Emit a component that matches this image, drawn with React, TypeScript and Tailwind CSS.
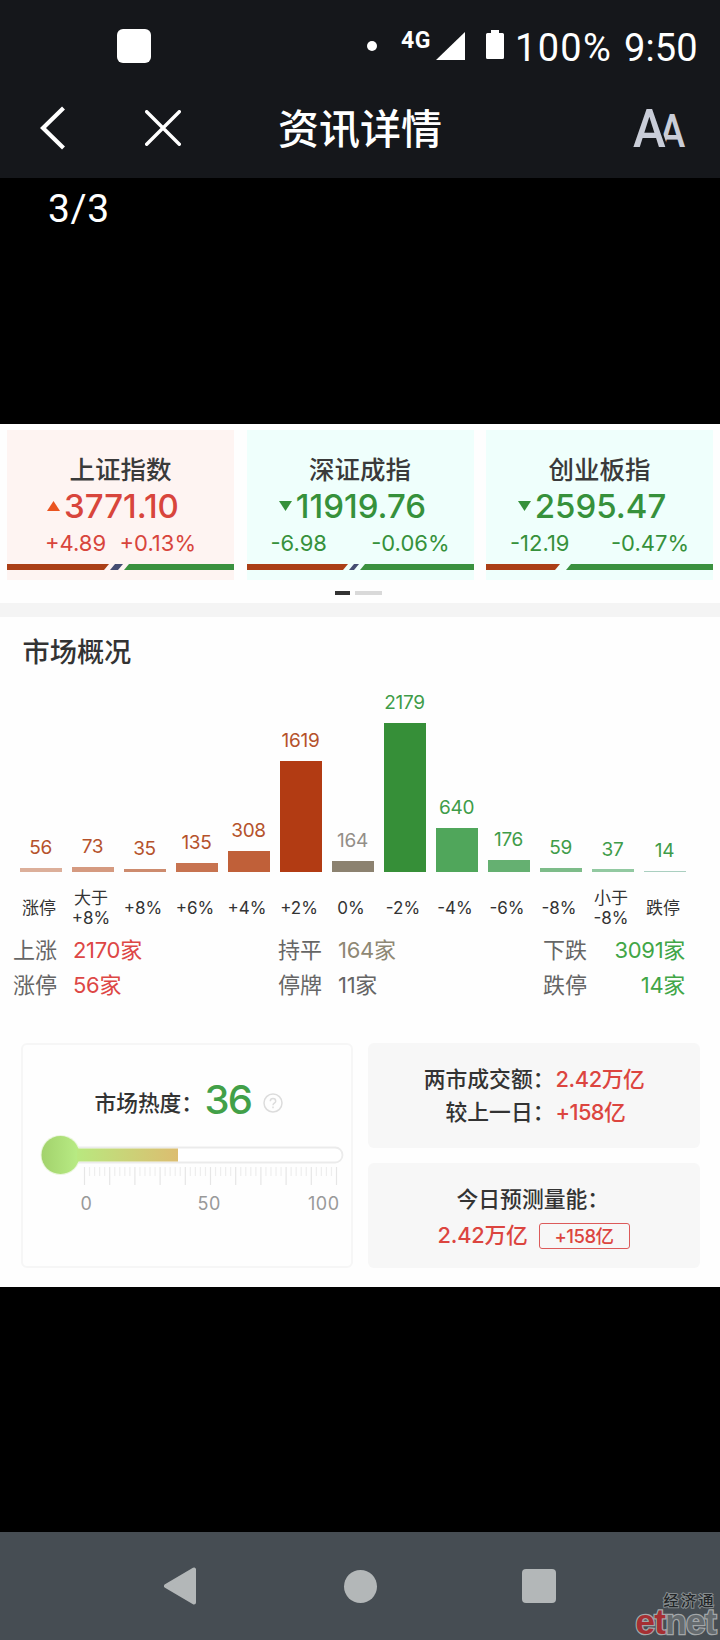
import React from 'react'

interface IndexQuote {
  name: string
  price: string
  change: string
  percent: string
  up: boolean
  // breadth bar: end of the rising part, flat part and start of the falling part
  rise: number
  flat?: [number, number]
  fall: number
}

const quotes: IndexQuote[] = [
  { name: '上证指数', price: '3771.10', change: '+4.89', percent: '+0.13%', up: true, rise: 102, flat: [103, 116], fall: 117 },
  { name: '深证成指', price: '11919.76', change: '-6.98', percent: '-0.06%', up: false, rise: 101, flat: [102, 112], fall: 113 },
  { name: '创业板指', price: '2595.47', change: '-12.19', percent: '-0.47%', up: false, rise: 74, fall: 80 },
]

const bars = [
  { label: ['涨停'], value: 56, height: 4, fill: 'bg-[#dcaf9a]', text: 'text-[#b5522b]' },
  { label: ['大于', '+8%'], value: 73, height: 5, fill: 'bg-[#d59a80]', text: 'text-[#b5522b]' },
  { label: ['+8%'], value: 35, height: 3, fill: 'bg-[#cd8b6e]', text: 'text-[#b5522b]' },
  { label: ['+6%'], value: 135, height: 9.5, fill: 'bg-[#c77350]', text: 'text-[#b5522b]' },
  { label: ['+4%'], value: 308, height: 21, fill: 'bg-[#c06039]', text: 'text-[#b5522b]' },
  { label: ['+2%'], value: 1619, height: 111, fill: 'bg-[#b23b13]', text: 'text-[#b5522b]' },
  { label: ['0%'], value: 164, height: 11.3, fill: 'bg-[#8c8270]', text: 'text-[#938e88]' },
  { label: ['-2%'], value: 2179, height: 149, fill: 'bg-[#368f38]', text: 'text-[#3f9c49]' },
  { label: ['-4%'], value: 640, height: 44, fill: 'bg-[#50a65b]', text: 'text-[#3f9c49]' },
  { label: ['-6%'], value: 176, height: 12, fill: 'bg-[#65b071]', text: 'text-[#3f9c49]' },
  { label: ['-8%'], value: 59, height: 4, fill: 'bg-[#7dbc89]', text: 'text-[#3f9c49]' },
  { label: ['小于', '-8%'], value: 37, height: 2.6, fill: 'bg-[#92c9a1]', text: 'text-[#3f9c49]' },
  { label: ['跌停'], value: 14, height: 1, fill: 'bg-[#aacfc0]', text: 'text-[#3f9c49]' },
]

const StatusBar = () => (
  <div className="flex h-[92px] items-center pl-[117px] font-[Roboto] text-white">
    <div className="h-[34px] w-[34px] rounded-[6px] bg-white" />
    <div className="ml-[216px] h-[10px] w-[10px] rounded-full bg-white" />
    <span className="mb-[12px] ml-[24px] w-[32px] text-[23px] leading-none font-bold tracking-[0.5px]">4G</span>
    <svg className="ml-[3px]" width="29" height="28" viewBox="0 0 29 28">
      <path d="M29 0v28H0z" fill="#fff" />
    </svg>
    <svg className="mb-[3px] ml-[21px]" width="18" height="29" viewBox="0 0 18 29">
      <path d="M5 0h8v3h3.500q1.500 0 1.500 1.500v23q0 1.500-1.500 1.500h-15Q0 29 0 27.500v-23Q0 3 1.500 3H5z" fill="#fff" />
    </svg>
    <span className="mt-[4px] ml-[11px] flex gap-[12px] text-[38px] leading-none whitespace-nowrap">
      <span className="tracking-[1.300px]">100%</span>
      <span className="tracking-[0.100px]">9:50</span>
    </span>
  </div>
)

const TitleBar = () => (
  <div className="flex h-[72px] items-center pl-[40px] text-white">
    <svg width="26" height="44" viewBox="0 0 26 44" fill="none" stroke="#fff" strokeWidth="4.200">
      <path d="M23.500 2L3 22l20.500 20" />
    </svg>
    <svg className="ml-[79px]" width="36" height="36" viewBox="0 0 36 36" fill="none" stroke="#fff" strokeWidth="3.400" strokeLinecap="round">
      <path d="M1.700 1.700l32.600 32.600M34.300 1.700L1.700 34.300" />
    </svg>
    <h1 className="mt-[-3px] ml-[97px] w-[164px] font-['Noto_Sans_CJK_SC',sans-serif] text-[41px] leading-none font-medium whitespace-nowrap">
      资讯详情
    </h1>
    <div className="mt-[2px] ml-[191px] flex items-baseline font-[Roboto] leading-none text-[#c9cdd8]">
      <span className="relative z-10 w-[33px] origin-left scale-x-[.93] text-[53px] font-medium [-webkit-text-stroke:5px_#15171b] [paint-order:stroke]">A</span>
      <span className="ml-[-7px] origin-left scale-x-[.86] text-[46px] font-medium">A</span>
    </div>
  </div>
)

const BreadthBar = ({ rise, flat, fall }: Pick<IndexQuote, 'rise' | 'flat' | 'fall'>) => (
  <svg className="block" width="227" height="6" viewBox="0 0 227 6">
    <path d={`M0 0H${rise}L${rise - 5} 6H0z`} fill="#ab3f17" />
    {flat && <path d={`M${flat[0] + 5} 0H${flat[1]}L${flat[1] - 5} 6H${flat[0]}z`} fill="#454d72" />}
    <path d={`M${fall + 5} 0H227V6H${fall}z`} fill="#3a913f" />
  </svg>
)

const QuoteCard = ({ quote }: { quote: IndexQuote }) => {
  const color = quote.up ? 'text-[#d8453c]' : 'text-[#36913b]'
  return (
    <div className={`h-[150px] w-[227px] pt-[27px] ${quote.up ? 'bg-[#fef4f2]' : 'bg-[#effffc]'}`}>
      <div className="flex h-[26px] items-center justify-center text-[25.500px] leading-none font-medium text-[#3a3a3a]">{quote.name}</div>
      <div className={`mt-[6px] flex h-[34px] items-center justify-center gap-[4px] pr-[15px] text-[33px] leading-none font-[450] ${color}`}>
        <svg width="13" height="10" viewBox="0 0 13 10">
          {quote.up ? <path d="M6.500 0L13 10H0z" fill="#ea5420" /> : <path d="M0 0h13L6.500 10z" fill="#36913b" />}
        </svg>
        {quote.price}
      </div>
      <div className={`mt-[8px] flex h-[24px] items-center justify-between text-[22px] leading-none ${quote.up ? 'pr-[38px] pl-[38px]' : 'pr-[24px] pl-[24px]'} ${color}`}>
        <span>{quote.change}</span>
        <span>{quote.percent}</span>
      </div>
      <div className="mt-[9px]">
        <BreadthBar rise={quote.rise} flat={quote.flat} fall={quote.fall} />
      </div>
    </div>
  )
}

const Distribution = () => (
  <div>
    <div className="flex h-[206px] items-end pl-[14.500px]">
      {bars.map((bar, i) => (
        <div key={i} className="flex w-[52px] flex-col items-center">
          <span className={`mb-[9.600px] text-[19px] leading-[20px] tracking-[-0.3px] ${bar.text}`}>{bar.value}</span>
          <div className={`w-[42px] ${bar.fill}`} style={{ height: bar.height }} />
        </div>
      ))}
    </div>
    <div className="mt-[16px] flex h-[40px] items-center pl-[13px] text-[17px] leading-[20px] text-[#333]" >
      {bars.map((bar, i) => (
        <div key={i} className="flex w-[52px] flex-col items-center whitespace-nowrap">
          {bar.label.map((line) => (
            <span key={line} className="h-[20px]">{line}</span>
          ))}
        </div>
      ))}
    </div>
  </div>
)

const Stat = ({ label, value, color }: { label: string; value: string; color: string }) => (
  <div className="flex h-[35px] items-center">
    <span className="w-[60px] text-[#666]">{label}</span>
    <span className={`flex-1 tracking-[-0.3px] ${color}`}>{value}</span>
  </div>
)

const Summary = () => (
  <div className="mt-[4px] flex text-[22px] leading-none whitespace-nowrap">
    <div className="w-[265px] pl-[13px]">
      <Stat label="上涨" value="2170家" color="text-[#dd4745]" />
      <Stat label="涨停" value="56家" color="text-[#dd4745]" />
    </div>
    <div className="w-[265px] pl-[13px]">
      <Stat label="持平" value="164家" color="text-[#8f8874]" />
      <Stat label="停牌" value="11家" color="text-[#666]" />
    </div>
    <div className="w-[155px] pl-[13px]">
      <Stat label="下跌" value="3091家" color="text-right text-[#41a646]" />
      <Stat label="跌停" value="14家" color="text-right text-[#41a646]" />
    </div>
  </div>
)

const Thermometer = () => (
  <svg className="block" width="306" height="74" viewBox="0 0 306 74">
    <defs>
      <linearGradient id="bulb">
        <stop offset="0" stopColor="#a2d26c" />
        <stop offset="1" stopColor="#b9ec85" />
      </linearGradient>
      <linearGradient id="tube">
        <stop offset="0" stopColor="#b9e87f" />
        <stop offset="1" stopColor="#dcbd70" />
      </linearGradient>
    </defs>
    <rect x="22" y="13.500" width="280.500" height="15" rx="7.500" fill="#fff" stroke="#ebebeb" strokeWidth="1.800" />
    <circle cx="20.500" cy="21" r="20" fill="#eaf6dc" />
    <circle cx="20.500" cy="21" r="19" fill="url(#bulb)" />
    <path d="M37 14.500h101v13H37z" fill="url(#tube)" />
    {Array.from({ length: 51 }).map((_, i) => (
      <path key={i} d={`M${44.5 + i * 5.04} 33v${i % 5 === 0 ? 18 : 9}`} stroke={i % 5 === 0 ? '#e6e6e6' : '#eeeeee'} strokeWidth="1.200" />
    ))}
  </svg>
)

const HeatCard = () => (
  <div className="h-[225px] w-[332px] rounded-[6px] border-2 border-[#f6f6f6]">
    <div className="mt-[33px] flex h-[48px] items-center pl-[72px]">
      <span className="mt-[4px] w-[110px] text-[21.700px] leading-none font-medium whitespace-nowrap text-[#333]">市场热度：</span>
      <span className="mt-[-4px] w-[58px] text-[40px] leading-none font-medium tracking-[-1.800px] text-[#42a048]">36</span>
      <svg className="mt-[2px]" width="20" height="20" viewBox="0 0 20 20" fill="none" stroke="#dcdcdc" strokeWidth="1.500">
        <circle cx="10" cy="10" r="9" />
        <path d="M7.300 8.200c0-3.600 5.400-3.600 5.400 0 0 2-2.700 2-2.700 4M10 13.500v1.700" />
      </svg>
    </div>
    <div className="mt-[8px] ml-[17px]">
      <Thermometer />
    </div>
    <div className="mt-[-14px] flex justify-between pr-[11px] pl-[58px] text-[18px] leading-[20px] tracking-[0.5px] text-[#999]">
      <span>0</span>
      <span className="pl-[18px]">50</span>
      <span>100</span>
    </div>
  </div>
)

const TurnoverCards = () => (
  <div className="flex flex-col gap-[15px] text-[21.800px] leading-none whitespace-nowrap text-[#333]">
    <div className="h-[105px] w-[332px] rounded-[6px] bg-[#f7f7f7] pt-[20.500px]">
      <div className="flex h-[33px] items-center">
        <span className="w-[187px] text-right font-medium">两市成交额：</span>
        <span className="pl-[1px] font-[450] tracking-[-0.4px] text-[#dc453f]">2.42万亿</span>
      </div>
      <div className="flex h-[33px] items-center">
        <span className="w-[187px] text-right font-medium">较上一日：</span>
        <span className="pl-[1px] font-[450] tracking-[-0.6px] text-[#dc453f]">+158亿</span>
      </div>
    </div>
    <div className="h-[105px] w-[332px] rounded-[6px] bg-[#f7f7f7] pt-[19px]">
      <div className="flex h-[36px] items-center pl-[89px] font-medium">今日预测量能：</div>
      <div className="flex h-[36px] items-center pl-[70px] text-[#dc453f]">
        <span className="w-[101px] font-[450] tracking-[-0.2px]">2.42万亿</span>
        <span className="flex h-[26px] w-[91px] items-center justify-center rounded-[3px] border border-[#dc5a5a] text-[18.500px] font-[450] tracking-[-0.5px]">+158亿</span>
      </div>
    </div>
  </div>
)

const NavBar = () => (
  <div className="relative h-[108px] bg-[#464d53]">
    <div className="flex h-full items-center pl-[164px]">
      <svg width="33" height="38" viewBox="0 0 33 38">
        <path d="M2 19L30 2.500v33z" fill="#b3b7b8" stroke="#b3b7b8" strokeWidth="4" strokeLinejoin="round" />
      </svg>
      <div className="ml-[146.500px] h-[33px] w-[33px] rounded-full bg-[#b3b7b8]" />
      <div className="ml-[145px] h-[34px] w-[34px] rounded-[4px] bg-[#b3b7b8]" />
    </div>
    <div className="absolute right-[4px] bottom-0 flex flex-col items-end whitespace-nowrap">
      <span className="font-['Noto_Sans_CJK_SC',sans-serif] text-[15px] leading-[15px] font-medium tracking-[2.500px] text-[#222527] [-webkit-text-stroke:2px_#858b8e] [paint-order:stroke]">
        经济通
      </span>
      <span className="mt-[-3px] flex h-[36px] items-center pb-[1px] font-['Liberation_Sans',sans-serif] text-[35px] leading-none font-bold tracking-[-0.6px] text-[#656b6f] [-webkit-text-stroke:2.500px_#a3a7a9] [paint-order:stroke]">
        <span className="text-[#a62f33]">et</span>net
      </span>
    </div>
  </div>
)

const App = () => (
  <div className="flex h-[1640px] w-[720px] flex-col overflow-hidden bg-black font-[Inter,'Noto_Sans_CJK_SC',sans-serif]">
    <header className="h-[178px] bg-[#15171b]">
      <StatusBar />
      <TitleBar />
    </header>
    <div className="h-[246px] pt-[9px] pl-[48px] font-[Roboto] text-[39px] leading-[44px] tracking-[0.6px] text-white">3/3</div>
    <main className="h-[863px] bg-[#fefefe]">
      <div className="flex gap-[12.500px] pt-[6px] pl-[7px]">
        {quotes.map((quote) => (
          <QuoteCard key={quote.name} quote={quote} />
        ))}
      </div>
      <div className="flex h-[23px] gap-[5px] pt-[11px] pl-[335px]">
        <div className="h-[4px] w-[15px] bg-[#333]" />
        <div className="h-[4px] w-[27px] bg-[#d9d9d9]" />
      </div>
      <div className="h-[14px] bg-[#f4f4f4]" />
      <h2 className="mt-[22px] mb-[-1px] pl-[22.500px] text-[27.200px] leading-[28px] font-medium text-[#333]">市场概况</h2>
      <Distribution />
      <Summary />
      <div className="mt-[41px] flex gap-[15px] pl-[20.500px]">
        <HeatCard />
        <TurnoverCards />
      </div>
    </main>
    <div className="h-[245px]" />
    <NavBar />
  </div>
)

export default App
